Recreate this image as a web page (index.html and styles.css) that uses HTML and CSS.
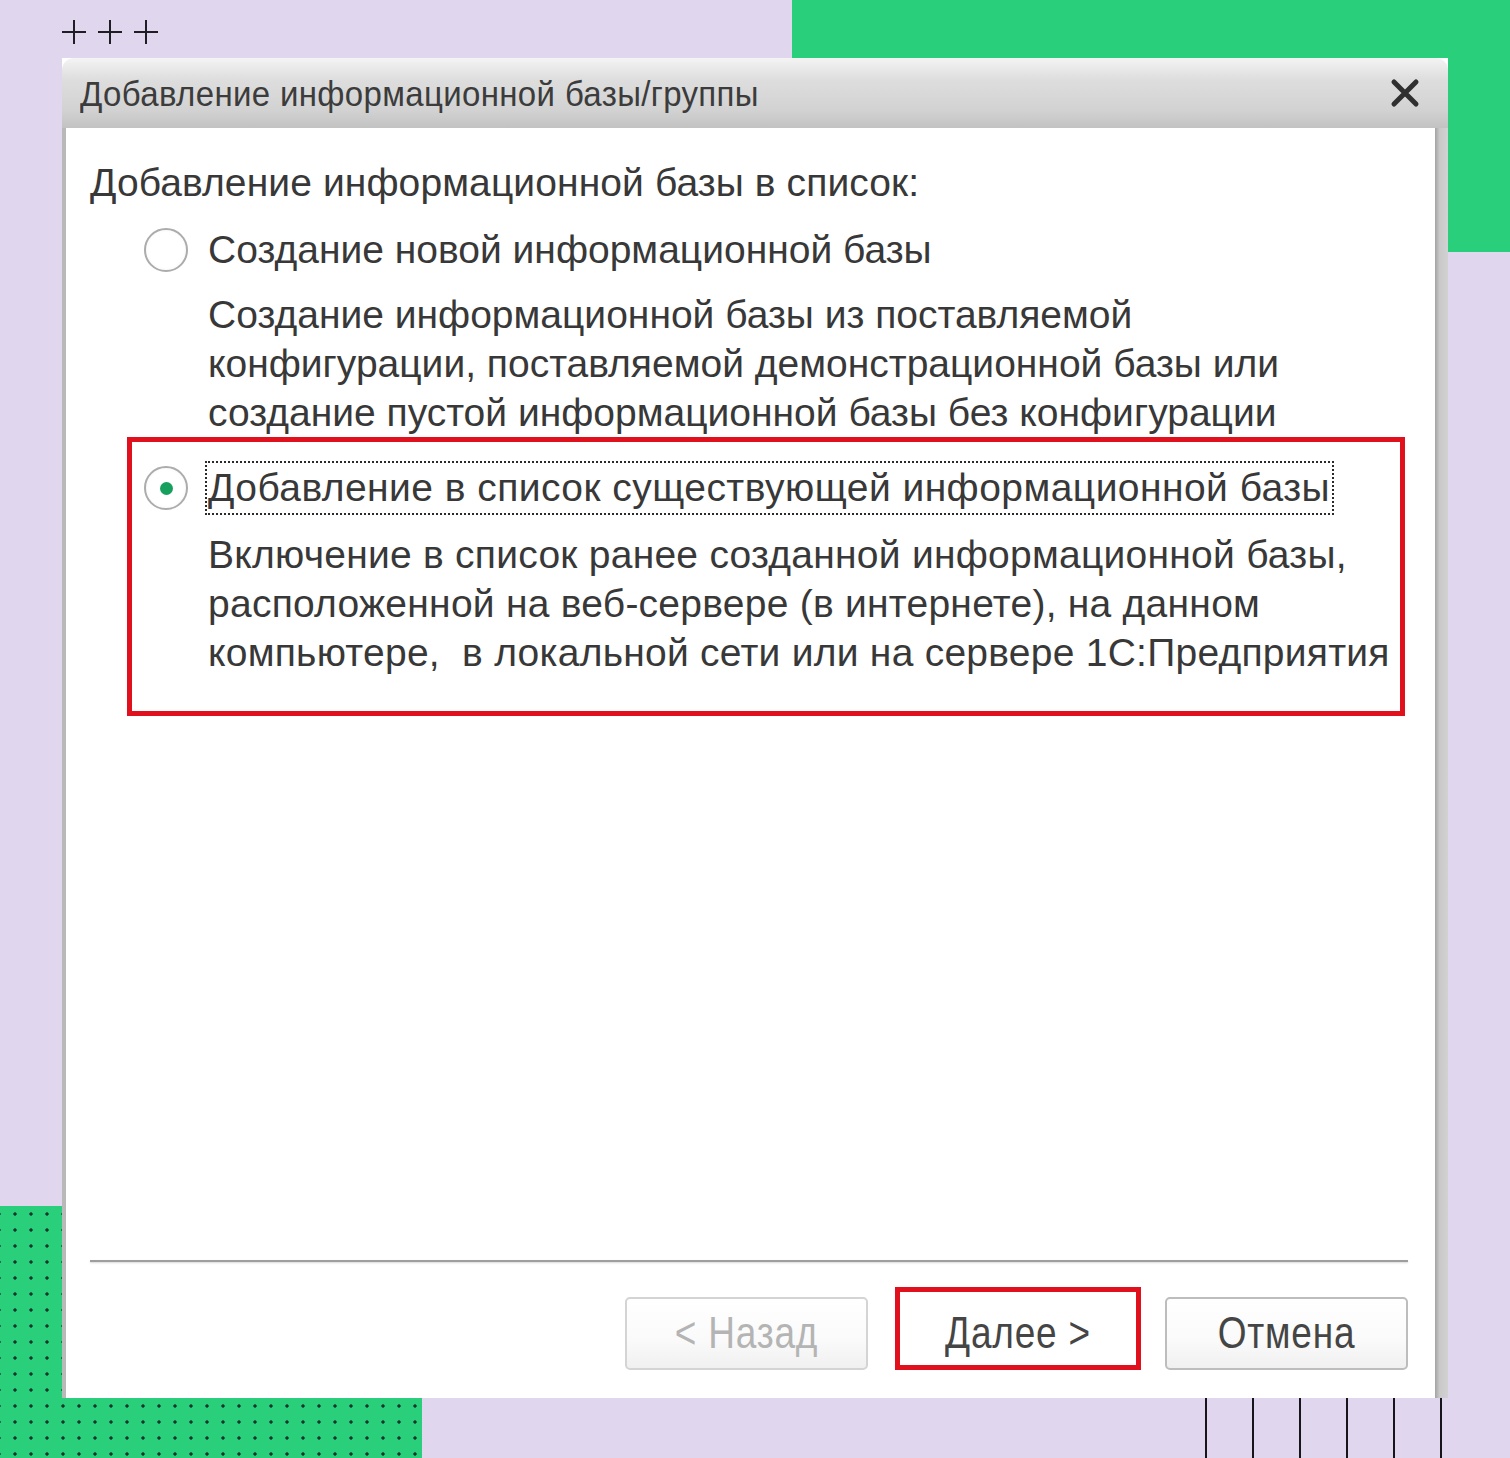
FILE: index.html
```html
<!DOCTYPE html>
<html lang="ru">
<head>
    <meta charset="UTF-8">
    <meta name="viewport" content="width=device-width, initial-scale=1.0">
    <title>Добавление информационной базы/группы</title>
    <link rel="stylesheet" href="styles.css">
</head>
<body>
    <div class="canvas">
        <div class="deco deco-green"></div>
        <div class="deco deco-dots"></div>
        <svg class="deco deco-plus" width="100" height="26" viewBox="0 0 100 26">
            <path d="M0 13h24M12 1v24M36 13h24M48 1v24M72 13h24M84 1v24" stroke="#1e1e24" stroke-width="2" fill="none"/>
        </svg>
        <div class="deco deco-bars">
            <span></span><span></span><span></span><span></span><span></span><span></span>
        </div>

        <div class="window">
            <div class="titlebar">
                <span class="title">Добавление информационной базы/группы</span>
                <svg class="close" width="30" height="30" viewBox="0 0 30 30">
                    <path d="M4 4L26 26M26 4L4 26" stroke="#303030" stroke-width="5" stroke-linecap="round"/>
                </svg>
            </div>
            <div class="window-body">
                <div class="frame-left"></div>
                <div class="panel">
                    <p class="heading">Добавление информационной базы в список:</p>
                    <div class="options">
                        <div class="option">
                            <div class="option-row">
                                <span class="radio"></span>
                                <span class="label">Создание новой информационной базы</span>
                            </div>
                            <p class="desc">Создание информационной базы из поставляемой<br>конфигурации, поставляемой демонстрационной базы или<br>создание пустой информационной базы без конфигурации</p>
                        </div>
                        <div class="option highlight">
                            <div class="option-row">
                                <span class="radio checked"></span>
                                <span class="label focused">Добавление в список существующей информационной базы</span>
                            </div>
                            <p class="desc">Включение в список ранее созданной информационной базы,<br>расположенной на веб-сервере (в интернете), на данном<br>компьютере,&nbsp; в локальной сети или на сервере 1С:Предприятия</p>
                        </div>
                    </div>
                    <div class="footer">
                        <div class="separator"></div>
                        <div class="buttons">
                            <button class="btn" disabled><span>&lt; Назад</span></button>
                            <button class="btn btn-marked"><span>Далее &gt;</span></button>
                            <button class="btn btn-cancel"><span>Отмена</span></button>
                        </div>
                    </div>
                </div>
                <div class="frame-right"></div>
            </div>
        </div>
    </div>
</body>
</html>
```

FILE: styles.css
```css
body {
    margin: 0;
    font-family: "Liberation Sans", Arial, sans-serif;
}
.canvas {
    position: relative;
    width: 1510px;
    height: 1458px;
    box-sizing: border-box;
    padding: 58px 0 0 62px;
    background-color: #e0d7ef;
    overflow: hidden;
}
.deco {
    position: absolute;
}
.deco-green {
    left: 792px;
    top: 0;
    width: 718px;
    height: 252px;
    background-color: #29cf7b;
}
.deco-dots {
    left: 0;
    top: 1206px;
    width: 422px;
    height: 252px;
    background-color: #29cf7b;
    background-image: radial-gradient(circle, #173826 0 1.4px, transparent 1.9px);
    background-size: 16px 16px;
    background-position: 7px 0;
}
.deco-plus {
    left: 62px;
    top: 19px;
}
.deco-bars {
    left: 1205px;
    top: 1398px;
    height: 60px;
    display: flex;
    gap: 45px;
}
.deco-bars > span {
    width: 2px;
    height: 60px;
    background-color: #15151a;
}

.window {
    position: relative;
    z-index: 1;
    width: 1386px;
    height: 1340px;
    background-color: #fff;
    display: flex;
    flex-direction: column;
}
.titlebar {
    height: 70px;
    flex: none;
    display: flex;
    align-items: center;
    justify-content: space-between;
    padding: 0 28px 0 18px;
    border-radius: 12px 12px 0 0;
    background: linear-gradient(to bottom, #f4f4f4 0%, #dedede 30%, #d2d2d2 75%, #c2c2c2 100%);
}
.title {
    font-size: 33px;
    color: #3c3c3c;
    letter-spacing: 0.35px;
    transform: scaleY(1.05);
    margin-top: 2px;
}
.close {
    display: block;
}
.window-body {
    flex: 1;
    display: flex;
    min-height: 0;
}
.frame-left {
    width: 4px;
    background-color: #b9b9b9;
}
.frame-right {
    width: 13px;
    background: linear-gradient(to right, #a3a3a3 0%, #c9c9c9 35%, #d2d2d2 100%);
}
.panel {
    flex: 1;
    display: flex;
    flex-direction: column;
    background-color: #fff;
    color: #383838;
}
.heading {
    margin: 0;
    padding: 30px 0 0 24px;
    font-size: 39px;
    line-height: 49px;
    letter-spacing: 0.1px;
    white-space: nowrap;
}
.options {
    margin: 16px 30px 0 61px;
}
.option {
    padding-left: 17px;
}
.option.highlight {
    border: 5px solid #e0101c;
    padding: 19px 0 34px 12px;
}
.option-row {
    display: flex;
    align-items: center;
    gap: 17px;
    height: 54px;
}
.radio {
    position: relative;
    width: 44px;
    height: 44px;
    box-sizing: border-box;
    border: 2px solid #acacac;
    border-radius: 50%;
    background: radial-gradient(circle, #fff 60%, #f1f1f1 100%);
    flex: none;
}
.radio.checked::after {
    content: "";
    position: absolute;
    left: 50%;
    top: 50%;
    width: 13px;
    height: 13px;
    margin: -6.5px 0 0 -6.5px;
    border-radius: 50%;
    background-color: #17a05d;
}
.label {
    font-size: 39px;
    line-height: 50px;
    padding: 0 2px 0 1px;
    border: 2px solid transparent;
    white-space: nowrap;
}
.label.focused {
    border: 2px dotted #2a2a2a;
    letter-spacing: 0.45px;
}
.desc {
    margin: 13px 0 0 64px;
    font-size: 39px;
    line-height: 49px;
    white-space: nowrap;
}
.highlight .desc {
    margin-top: 15px;
    letter-spacing: 0.25px;
}
.footer {
    margin: auto 27px 0 24px;
    padding-bottom: 28px;
}
.separator {
    height: 2px;
    background-color: #9e9e9e;
    box-shadow: 0 1px 2px #d8d8d8;
}
.buttons {
    display: flex;
    justify-content: flex-end;
    align-items: flex-end;
    margin-top: 25px;
}
.btn {
    width: 243px;
    height: 73px;
    box-sizing: border-box;
    border: 2px solid #bdbdbd;
    border-radius: 5px;
    background: linear-gradient(to bottom, #ffffff 0%, #fafafa 60%, #f0f0f0 100%);
    font-family: "Liberation Sans", Arial, sans-serif;
    font-size: 37px;
    letter-spacing: 0.8px;
    color: #454545;
    padding: 0;
}
.btn > span {
    display: inline-block;
    transform: scaleY(1.2);
}
.btn:disabled {
    color: #b4b4b4;
    border-color: #d4d4d4;
}
.btn-marked {
    width: 246px;
    height: 83px;
    margin-left: 27px;
    border: 5px solid #e0101c;
    border-radius: 0;
    background: #fff;
    padding-top: 10px;
}
.btn-cancel {
    margin-left: 24px;
}
```
